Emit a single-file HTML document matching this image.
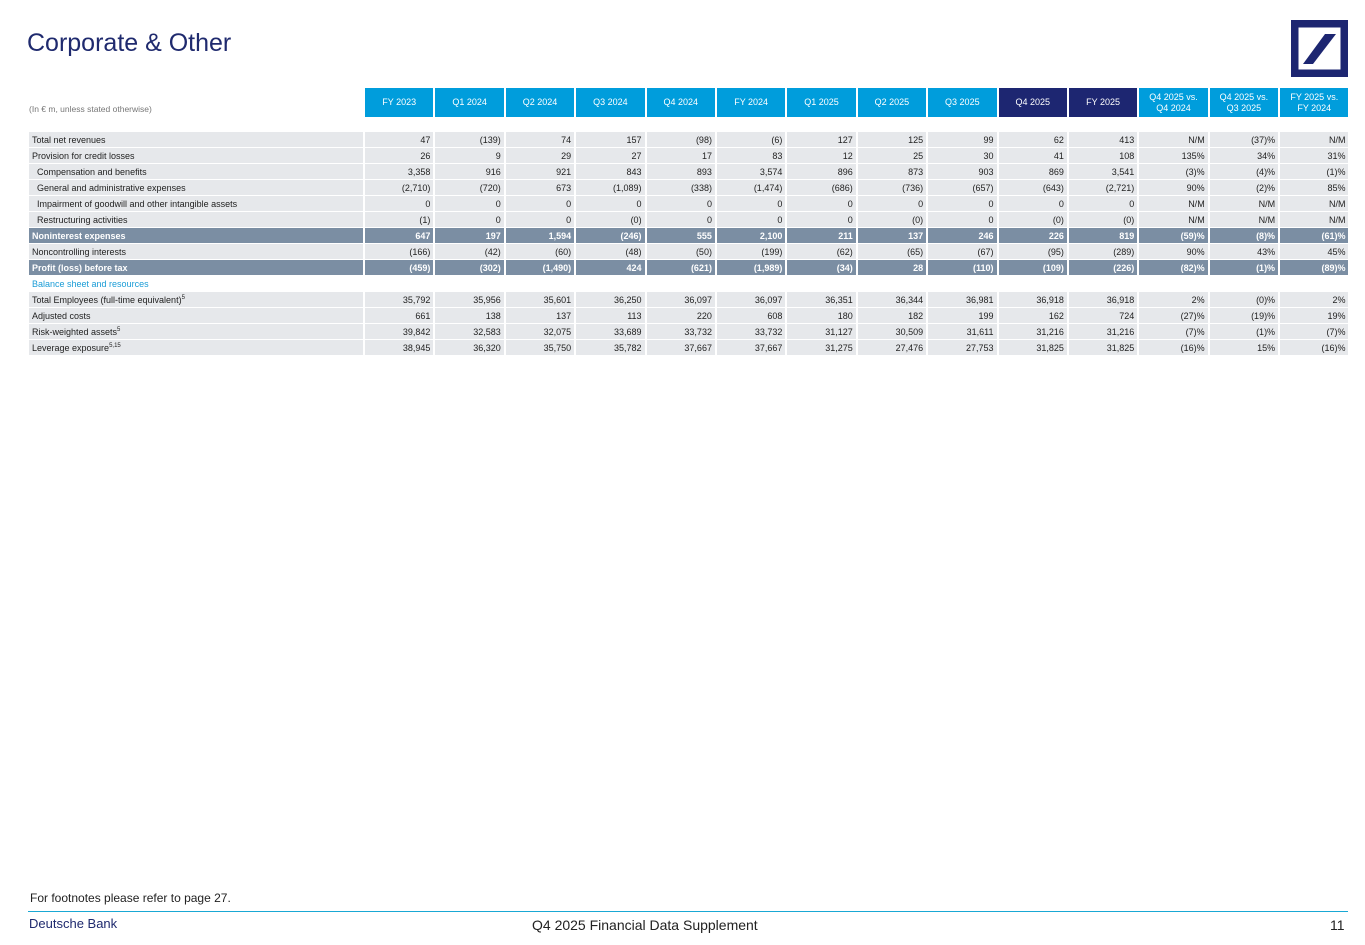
<!DOCTYPE html>
<html><head><meta charset="utf-8"><style>
body{margin:0;width:1365px;height:945px;position:relative;background:#fff;font-family:"Liberation Sans",sans-serif;color:#222;overflow:hidden}
h1{position:absolute;left:27px;top:29px;margin:0;font-weight:normal;font-size:25px;color:#1f2a6e;letter-spacing:0px}
table{position:absolute;left:27px;top:87px;border-collapse:separate;border-spacing:2px 1px;table-layout:fixed;font-size:9px}
td{padding:0 3px;height:15px;white-space:nowrap;text-align:right;background:#e6e8eb;overflow:hidden}
td:first-child{text-align:left;background:#e6e8eb}
tr.h td{height:27px;background:#009ddc;color:#fff;text-align:center;line-height:11px;padding:0}
tr.h td.d{background:#1d2671}
tr.h td:first-child{background:#fff;color:#777;text-align:left;vertical-align:bottom;padding-bottom:2px;font-size:8.5px}
tr.sp td{background:#fff;height:13px}
tr.b td{background:#7b8ea3;color:#fff;font-weight:bold}
tr.s td{background:#fff}
tr.s td:first-child{color:#1a9cd6}
.i{padding-left:8px!important}
sup{font-size:6px;line-height:0}
</style></head><body>
<h1>Corporate &amp; Other</h1>
<svg style="position:absolute;left:1291px;top:20px" width="57" height="57" viewBox="0 0 57 57"><rect x="0" y="0" width="57" height="57" fill="#1d2671"/><rect x="7.5" y="7.5" width="42" height="42" fill="#fff"/><polygon points="12,44 22,44 45,14 34,14" fill="#1d2671"/></svg>
<table>
<colgroup><col style="width:334px"><col span="14" style="width:68.4px"></colgroup>
<tr class="h"><td>(In € m, unless stated otherwise)</td><td>FY 2023</td><td>Q1 2024</td><td>Q2 2024</td><td>Q3 2024</td><td>Q4 2024</td><td>FY 2024</td><td>Q1 2025</td><td>Q2 2025</td><td>Q3 2025</td><td class="d">Q4 2025</td><td class="d">FY 2025</td><td>Q4 2025 vs.<br>Q4 2024</td><td>Q4 2025 vs.<br>Q3 2025</td><td>FY 2025 vs.<br>FY 2024</td></tr>
<tr class="sp"><td></td><td></td><td></td><td></td><td></td><td></td><td></td><td></td><td></td><td></td><td></td><td></td><td></td><td></td><td></td></tr>
<tr><td>Total net revenues</td><td>47</td><td>(139)</td><td>74</td><td>157</td><td>(98)</td><td>(6)</td><td>127</td><td>125</td><td>99</td><td>62</td><td>413</td><td>N/M</td><td>(37)%</td><td>N/M</td></tr>
<tr><td>Provision for credit losses</td><td>26</td><td>9</td><td>29</td><td>27</td><td>17</td><td>83</td><td>12</td><td>25</td><td>30</td><td>41</td><td>108</td><td>135%</td><td>34%</td><td>31%</td></tr>
<tr><td class="i">Compensation and benefits</td><td>3,358</td><td>916</td><td>921</td><td>843</td><td>893</td><td>3,574</td><td>896</td><td>873</td><td>903</td><td>869</td><td>3,541</td><td>(3)%</td><td>(4)%</td><td>(1)%</td></tr>
<tr><td class="i">General and administrative expenses</td><td>(2,710)</td><td>(720)</td><td>673</td><td>(1,089)</td><td>(338)</td><td>(1,474)</td><td>(686)</td><td>(736)</td><td>(657)</td><td>(643)</td><td>(2,721)</td><td>90%</td><td>(2)%</td><td>85%</td></tr>
<tr><td class="i">Impairment of goodwill and other intangible assets</td><td>0</td><td>0</td><td>0</td><td>0</td><td>0</td><td>0</td><td>0</td><td>0</td><td>0</td><td>0</td><td>0</td><td>N/M</td><td>N/M</td><td>N/M</td></tr>
<tr><td class="i">Restructuring activities</td><td>(1)</td><td>0</td><td>0</td><td>(0)</td><td>0</td><td>0</td><td>0</td><td>(0)</td><td>0</td><td>(0)</td><td>(0)</td><td>N/M</td><td>N/M</td><td>N/M</td></tr>
<tr class="b"><td>Noninterest expenses</td><td>647</td><td>197</td><td>1,594</td><td>(246)</td><td>555</td><td>2,100</td><td>211</td><td>137</td><td>246</td><td>226</td><td>819</td><td>(59)%</td><td>(8)%</td><td>(61)%</td></tr>
<tr><td>Noncontrolling interests</td><td>(166)</td><td>(42)</td><td>(60)</td><td>(48)</td><td>(50)</td><td>(199)</td><td>(62)</td><td>(65)</td><td>(67)</td><td>(95)</td><td>(289)</td><td>90%</td><td>43%</td><td>45%</td></tr>
<tr class="b"><td>Profit (loss) before tax</td><td>(459)</td><td>(302)</td><td>(1,490)</td><td>424</td><td>(621)</td><td>(1,989)</td><td>(34)</td><td>28</td><td>(110)</td><td>(109)</td><td>(226)</td><td>(82)%</td><td>(1)%</td><td>(89)%</td></tr>
<tr class="s"><td>Balance sheet and resources</td><td></td><td></td><td></td><td></td><td></td><td></td><td></td><td></td><td></td><td></td><td></td><td></td><td></td><td></td></tr>
<tr><td>Total Employees (full-time equivalent)<sup>5</sup></td><td>35,792</td><td>35,956</td><td>35,601</td><td>36,250</td><td>36,097</td><td>36,097</td><td>36,351</td><td>36,344</td><td>36,981</td><td>36,918</td><td>36,918</td><td>2%</td><td>(0)%</td><td>2%</td></tr>
<tr><td>Adjusted costs</td><td>661</td><td>138</td><td>137</td><td>113</td><td>220</td><td>608</td><td>180</td><td>182</td><td>199</td><td>162</td><td>724</td><td>(27)%</td><td>(19)%</td><td>19%</td></tr>
<tr><td>Risk-weighted assets<sup>5</sup></td><td>39,842</td><td>32,583</td><td>32,075</td><td>33,689</td><td>33,732</td><td>33,732</td><td>31,127</td><td>30,509</td><td>31,611</td><td>31,216</td><td>31,216</td><td>(7)%</td><td>(1)%</td><td>(7)%</td></tr>
<tr><td>Leverage exposure<sup>5,15</sup></td><td>38,945</td><td>36,320</td><td>35,750</td><td>35,782</td><td>37,667</td><td>37,667</td><td>31,275</td><td>27,476</td><td>27,753</td><td>31,825</td><td>31,825</td><td>(16)%</td><td>15%</td><td>(16)%</td></tr>
</table>
<div style="position:absolute;left:30px;top:891px;font-size:12px;color:#222">For footnotes please refer to page 27.</div>
<div style="position:absolute;left:28px;top:911px;width:1320px;height:1px;background:#19a8d4"></div>
<div style="position:absolute;left:29px;top:916px;font-size:13px;color:#1f2a6e">Deutsche Bank</div>
<div style="position:absolute;left:532px;top:917px;font-size:14px;color:#222">Q4 2025 Financial Data Supplement</div>
<div style="position:absolute;left:1330px;top:917px;font-size:14px;color:#222">11</div>
</body></html>
